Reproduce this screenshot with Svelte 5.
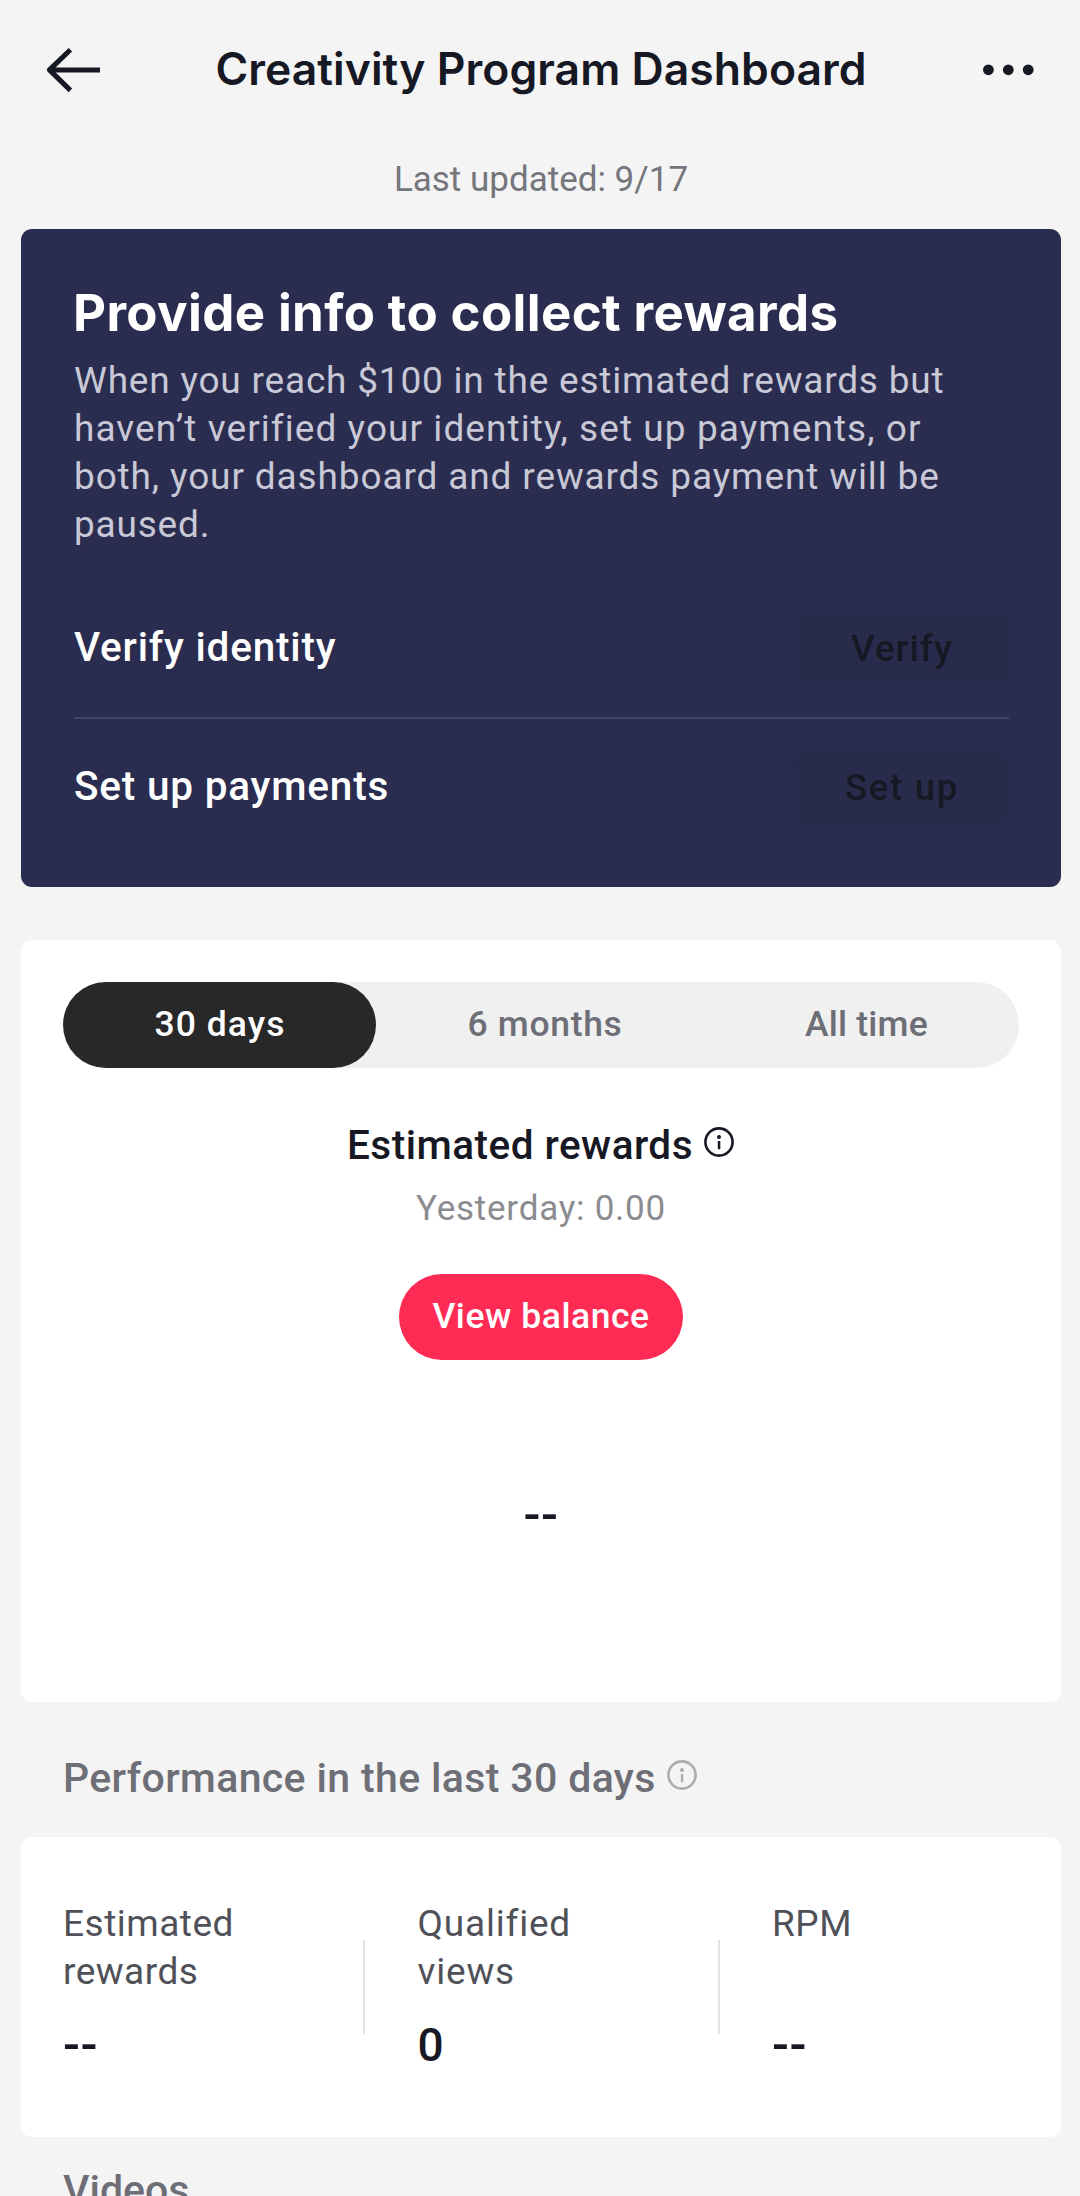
<script>
  const intro = [
    'When you reach $100 in the estimated rewards but',
    'haven’t verified your identity, set up payments, or',
    'both, your dashboard and rewards payment will be',
    'paused.'
  ];
  const tabs = ['30 days', '6 months', 'All time'];
  const stats = [
    { label: ['Estimated', 'rewards'], value: '--' },
    { label: ['Qualified', 'views'], value: '0' },
    { label: ['RPM'], value: '--' }
  ];
  let active = $state(0);
</script>

{#snippet info()}
  <svg class="info" width="32" height="32" viewBox="0 0 32 32" aria-hidden="true">
    <circle cx="16" cy="16" r="13.6" fill="none" stroke="currentColor" stroke-width="2.6" />
    <circle cx="16" cy="11" r="2" fill="currentColor" />
    <rect x="14.8" y="15" width="2.5" height="8.2" fill="currentColor" />
  </svg>
{/snippet}

<div class="page">
  <header>
    <svg width="58" height="56" viewBox="0 0 58 56" aria-label="Back">
      <path d="M27.4 8.8 6.4 28.9 27.4 49.4M7 28.9h50" fill="none" stroke="#161823" stroke-width="5" stroke-linejoin="round" />
    </svg>
    <h1>Creativity Program Dashboard</h1>
    <svg width="58" height="18" viewBox="0 0 58 18" aria-label="More">
      <circle cx="7.4" cy="9.8" r="5.4" fill="#161823" />
      <circle cx="27.3" cy="9.8" r="5.4" fill="#161823" />
      <circle cx="47.2" cy="9.8" r="5.4" fill="#161823" />
    </svg>
  </header>
  <p class="updated">Last updated: 9/17</p>

  <section class="card setup">
    <h2>Provide info to collect rewards</h2>
    <p class="intro">
      {#each intro as line}<span>{line}</span>{/each}
    </p>
    <div class="row">
      <span>Verify identity</span>
      <button class="verify">Verify</button>
    </div>
    <div class="row">
      <span>Set up payments</span>
      <button>Set up</button>
    </div>
  </section>

  <section class="card rewards">
    <div class="tabs">
      {#each tabs as tab, i}
        <button class:active={active === i} onclick={() => (active = i)}>{tab}</button>
      {/each}
    </div>
    <h3><span>Estimated rewards</span>{@render info()}</h3>
    <p class="yesterday">Yesterday: 0.00</p>
    <button class="balance">View balance</button>
    <p class="value empty">--</p>
  </section>

  <h3 class="section"><span>Performance in the last 30 days</span>{@render info()}</h3>

  <section class="card stats">
    {#each stats as stat, i}
      {#if i > 0}<i class="rule"></i>{/if}
      <div class="stat">
        <div class="label">
          {#each stat.label as word}<span>{word}</span>{/each}
        </div>
        <div class="value" class:empty={stat.value === '--'}>{stat.value}</div>
      </div>
    {/each}
  </section>

  <h3 class="videos">Videos</h3>
</div>

<style>
  :global(body) { background: #f4f4f5; }
  .page {
    box-sizing: border-box;
    width: 1080px;
    height: 2196px;
    overflow: hidden;
    padding: 0 19px 0 21px;
    background: #f4f4f5;
    color: #161823;
    font-family: Roboto, 'Liberation Sans', sans-serif;
    white-space: nowrap;
  }
  h1, h2, h3, p { margin: 0; }
  button { border: 0; padding: 0; font-family: inherit; }

  header {
    display: flex;
    align-items: center;
    justify-content: space-between;
    height: 137px;
    padding: 0 22px 0 22px;
  }
  h1, h2 { font-family: Inter, Roboto, sans-serif; }
  h1 { font-size: 44.5px; font-weight: 600; letter-spacing: 0.04px; }
  .updated {
    padding-bottom: 6px;
    font-size: 35px;
    line-height: 86px;
    text-align: center;
    color: #75767c;
  }

  .card { box-sizing: border-box; border-radius: 11px; background: #fff; }

  .setup {
    height: 658px;
    padding: 53px 52px 0 53px;
    background: #2a2d4f;
    color: #fff;
  }
  h2 {
    margin-left: -1px;
    font-size: 51px;
    font-weight: 700;
    line-height: 62px;
    letter-spacing: 0.37px;
  }
  .intro {
    margin: 13px 0 31px;
    font-size: 37px;
    line-height: 48px;
    letter-spacing: 0.8px;
    color: #c8c8d7;
  }
  .intro span { display: block; }
  .intro span:nth-child(2) { letter-spacing: 1.06px; }
  .intro span:nth-child(3) { letter-spacing: 0.87px; }
  .row {
    display: flex;
    align-items: center;
    justify-content: space-between;
    height: 137px;
  }
  .row + .row { border-top: 2px solid #434566; }
  .row span {
    padding-bottom: 3px;
    font-size: 40.5px;
    font-weight: 500;
    letter-spacing: 0.8px;
  }
  .row button {
    width: 216px;
    height: 73px;
    padding-left: 2px;
    border-radius: 12px;
    background: #292b4d;
    color: #161823;
    font-size: 36.5px;
    font-weight: 500;
    letter-spacing: 1.7px;
  }
  .row .verify { letter-spacing: 1.12px; }

  .rewards {
    display: flex;
    flex-direction: column;
    align-items: center;
    height: 762px;
    margin-top: 53px;
    padding: 42px 42px 0;
  }
  .tabs {
    display: grid;
    grid-template-columns: 313px 337px 306px;
    height: 86px;
    border-radius: 43px;
    background: #f0f0f0;
  }
  .tabs button {
    padding: 0 0 3px 1px;
    border-radius: 43px;
    background: none;
    color: #6d6e76;
    font-size: 35.5px;
    font-weight: 500;
    letter-spacing: 0.66px;
  }
  .tabs button:last-child { letter-spacing: 0.2px; }
  .tabs .active { background: #282828; color: #fff; letter-spacing: 1.04px; }
  h3 {
    display: flex;
    align-items: center;
    font-size: 40.5px;
    font-weight: 500;
    line-height: 50px;
    letter-spacing: 0.48px;
  }
  .rewards h3 { margin-top: 52px; }
  .info { margin-left: 10px; margin-bottom: 7px; }
  .yesterday {
    margin-top: 17px;
    font-size: 35px;
    line-height: 44px;
    letter-spacing: 0.76px;
    color: #8b8c90;
  }
  .balance {
    width: 284px;
    height: 86px;
    margin-top: 43px;
    padding-bottom: 2px;
    border-radius: 43px;
    background: #fe2c55;
    color: #fff;
    font-size: 35.5px;
    font-weight: 500;
    letter-spacing: 0.54px;
  }
  .value {
    font-size: 46px;
    font-weight: 500;
    line-height: 60px;
  }
  .empty { font-size: 50px; letter-spacing: 0.6px; }
  .rewards .value { margin-top: 125px; }

  .section {
    height: 118px;
    padding: 17px 0 0 42px;
    color: #6d6e76;
    font-size: 41px;
    letter-spacing: 0.36px;
  }
  .section .info { color: #adadaf; }

  .stats {
    display: flex;
    height: 300px;
    padding: 63px 0 0 42px;
  }
  .stat { flex: none; width: 300px; }
  .stat:last-child { width: 240px; }
  .label {
    height: 96px;
    margin-bottom: 19px;
    font-size: 37px;
    line-height: 48px;
    letter-spacing: 0.5px;
    color: #505158;
  }
  .stat:nth-of-type(2) .label { letter-spacing: 0.8px; }
  .label span { display: block; }
  .rule {
    flex: none;
    width: 2px;
    height: 94px;
    margin: 40px 52.5px 0 0;
    background: #e2e2e3;
  }
  .videos {
    margin: 23px 0 0 42px;
    color: #6d6e76;
    font-size: 41px;
    line-height: 60px;
    letter-spacing: 0;
  }
</style>
